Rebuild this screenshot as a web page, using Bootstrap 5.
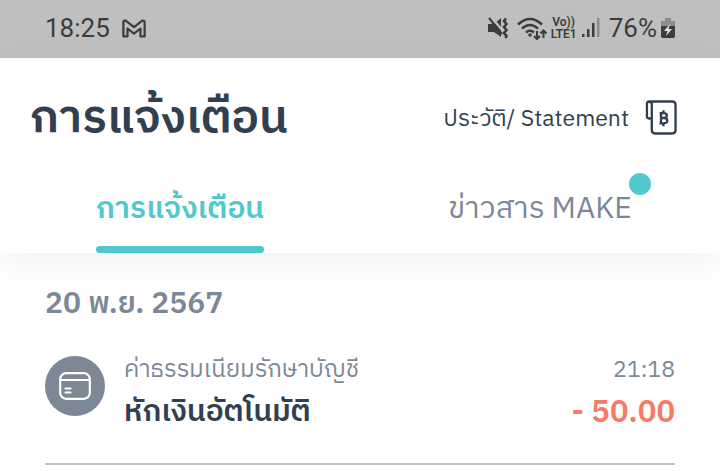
<!DOCTYPE html>
<html lang="th">
<head>
<meta charset="utf-8">
<meta name="viewport" content="width=device-width, initial-scale=1">
<title>การแจ้งเตือน</title>
<link href="https://cdn.jsdelivr.net/npm/bootstrap@5.3.0/dist/css/bootstrap.min.css" rel="stylesheet">
<style>
  :root { --ink: #323f50; --muted: #7d8897; --teal: #50c9ce; --coral: #f47c63; }
  body { font-family: "IBM Plex Sans Thai", "Noto Sans", "Noto Sans Thai", sans-serif; color: var(--ink); background: #fff; }
  .status-bar { height: 58px; padding: 0 45px 2px; background: #bfbfbf; color: #3c3c3c; font-family: Roboto, sans-serif; font-size: 26px; line-height: 32px; }
  .volte { font-size: 12px; line-height: 12px; font-weight: 600; }
  header { background: #fff; box-shadow: 0 12px 32px rgba(0, 0, 0, .05); }
  .page-head { height: 118px; padding: 0 43px 0 30px; }
  .page-title { font-size: 46px; line-height: 64px; font-weight: 600; padding-top: 4px; }
  .statement-link { font-size: 23px; line-height: 32px; color: var(--ink); }
  .statement-label { padding-top: 4px; }
  .tab-bar { height: 77px; }
  .tab-item { font-size: 30px; line-height: 44px; color: var(--muted); }
  .tab-item.active { color: var(--teal); font-weight: 600; }
  .tab-label { padding-top: 12px; }
  .tab-line { height: 7px; border-radius: 4px; background: var(--teal); }
  .new-dot { width: 22px; height: 22px; background: var(--teal); left: 100%; top: -3px; margin-left: -3px; }
  .feed { padding: 30px 45px 0; }
  .day { font-size: 30px; line-height: 44px; font-weight: 600; color: var(--muted); }
  .entry { margin-top: 26px; padding-bottom: 28px; border-bottom: 2px solid #c0c4cd; }
  .entry-icon { width: 60px; height: 60px; margin-top: 3px; background: var(--muted); }
  .entry-text { padding-left: 19px; }
  .entry-small { font-size: 23px; line-height: 34px; color: var(--muted); }
  .entry-note { font-size: 24px; }
  .entry-big { font-size: 30px; line-height: 44px; font-weight: 600; margin-top: 4px; }
  .amount { font-size: 31px; color: var(--coral); }
</style>
</head>
<body>
<div class="status-bar d-flex align-items-center justify-content-between">
  <div class="d-flex align-items-center gap-2">
    <span>18:25</span>
    <svg class="ms-1" width="24" height="19" viewBox="0 0 26 20" fill="none" stroke="#3c3c3c" stroke-width="2.400" stroke-linejoin="round" aria-label="Gmail"><path d="M1.500 18.500V3Q2 1 4 1.500L13 8.500 22 1.500Q24 1 24.500 3V18.500H20V10L13 15.500 6 10V18.500Z"/></svg>
  </div>
  <div class="d-flex align-items-center">
    <svg class="me-2" width="21" height="22" viewBox="0 0 21 22" aria-label="Vibrate"><path d="M0 7H6L13 1V20L6 15H0Z" fill="#3c3c3c"/><path d="M3 0 15 14" stroke="#bfbfbf" stroke-width="2.500"/><path d="M1 1 14 17" stroke="#3c3c3c" stroke-width="2"/><path d="M18 1.500l-2 2.500 2.500 3-2.500 3 2.500 3-2.500 3 2.500 3-1 2" fill="none" stroke="#3c3c3c" stroke-width="2.600"/></svg>
    <svg class="me-1" width="30" height="23" viewBox="0 0 30 23" fill="none" stroke="#3c3c3c" stroke-width="2.500" aria-label="Wi-Fi"><path d="M1 7.500Q13-3.500 25 7.500M5 11.500Q13 4.500 21 11.500M9 15.500Q13 12 17 15.500"/><circle cx="13" cy="18" r="1.800" fill="#3c3c3c" stroke="none"/><path d="M20 14V22M17 19 20 22 23 19M26.500 21V13.500M23.500 16.500 26.500 13.500 29.500 16.500" stroke-width="2"/></svg>
    <span class="volte text-center me-1">Vo))<br>LTE1</span>
    <svg class="me-2" width="20" height="20" viewBox="0 0 20 20" fill="#3c3c3c" aria-label="Signal"><path d="M1 16H3.500V19H1ZM6 11H8.500V19H6ZM11 5H13.500V19H11Z"/><path d="M16 0H18.500V19H16Z" fill="#8d8d8d"/></svg>
    <span class="me-1">76%</span>
    <svg width="14" height="21" viewBox="0 0 14 21" aria-label="Battery"><path d="M4 0H10V3H14V10H0V3H4Z" fill="#8d8d8d"/><path d="M0 8H14V18Q14 20 12 20H2Q0 20 0 18Z" fill="#3c3c3c"/><path d="M9 6 3 13H6.500L5 18 11 11H7.500Z" fill="#e0e0e0"/></svg>
  </div>
</div>
<header>
  <div class="page-head d-flex align-items-center justify-content-between">
    <h1 class="page-title m-0">การแจ้งเตือน</h1>
    <a href="#statement" class="statement-link d-flex align-items-center gap-3 text-decoration-none">
      <span class="statement-label">ประวัติ/ Statement</span>
      <svg width="32" height="35" viewBox="0 0 33 36" fill="none" stroke="#323f50" stroke-width="2.400" aria-hidden="true"><path d="M7 19H4Q2 19 2 17V4Q2 1.500 4.500 1.500H28Q31.500 1.500 31.500 5V31Q31.500 34.500 28 34.500H10.500Q7 34.500 7 31V5Q7 2 4.500 1.500"/><path d="M15 13.500H19.500Q22.500 13.500 22.500 16T19.500 18.500H16M19.500 18.500Q23 18.500 23 21.200T19.500 24H15M16.500 13.500V24M19 10.500V13.500M19 24V27"/></svg>
    </a>
  </div>
  <nav class="tab-bar d-flex">
    <a href="#alerts" class="tab-item col-6 d-flex justify-content-center text-decoration-none active" aria-current="page">
      <span class="d-flex flex-column justify-content-between"><span class="tab-label">การแจ้งเตือน</span><span class="tab-line"></span></span>
    </a>
    <a href="#news" class="tab-item col-6 d-flex justify-content-center text-decoration-none">
      <span class="tab-label position-relative align-self-start">ข่าวสาร MAKE<span class="new-dot position-absolute rounded-circle"></span></span>
    </a>
  </nav>
</header>
<main class="feed">
  <h2 class="day m-0">20 พ.ย. 2567</h2>
  <article class="entry d-flex">
    <div class="entry-icon rounded-circle d-flex align-items-center justify-content-center flex-shrink-0">
      <svg width="32" height="28" viewBox="0 0 32 28" fill="none" stroke="#fff" stroke-width="2.200" stroke-linecap="round" aria-hidden="true"><rect x="1.200" y="1.200" width="29.600" height="25.600" rx="6"/><path d="M1.500 8H30.500M6.500 16.500H11.500M6.500 20.500H11.500"/></svg>
    </div>
    <div class="entry-text flex-grow-1">
      <div class="entry-small entry-note">ค่าธรรมเนียมรักษาบัญชี</div>
      <div class="entry-big">หักเงินอัตโนมัติ</div>
    </div>
    <div class="text-end">
      <div class="entry-small">21:18</div>
      <div class="entry-big amount">- 50.00</div>
    </div>
  </article>
</main>
<script src="https://cdn.jsdelivr.net/npm/bootstrap@5.3.0/dist/js/bootstrap.bundle.min.js"></script>
</body>
</html>
